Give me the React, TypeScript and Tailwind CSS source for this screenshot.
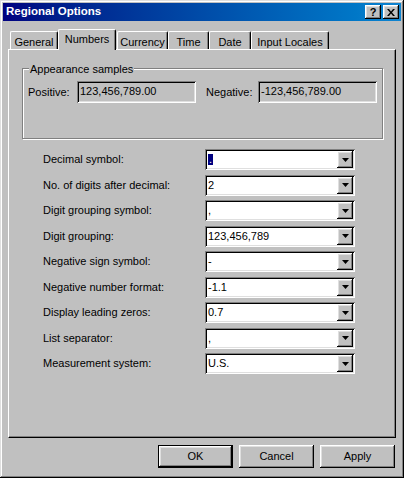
import React from "react";

const raised =
  "shadow-[inset_-1px_-1px_0_#000,inset_1px_1px_0_#fff,inset_-2px_-2px_0_#808080,inset_2px_2px_0_#dfdfdf]";
const sunken =
  "shadow-[inset_1px_1px_0_#808080,inset_-1px_-1px_0_#fff,inset_2px_2px_0_#000,inset_-2px_-2px_0_#dfdfdf]";

const tabs = [
  { label: "General", w: "w-[48px]", ml: "" },
  { label: "Numbers", w: "w-[58px]", ml: "", active: true },
  { label: "Currency", w: "w-[51px]", ml: "ml-[1px]" },
  { label: "Time", w: "w-[41px]", ml: "" },
  { label: "Date", w: "w-[42px]", ml: "" },
  { label: "Input Locales", w: "w-[78px]", ml: "" },
];

const rows: [string, string][] = [
  ["Decimal symbol:", "."],
  ["No. of digits after decimal:", "2"],
  ["Digit grouping symbol:", ","],
  ["Digit grouping:", "123,456,789"],
  ["Negative sign symbol:", "-"],
  ["Negative number format:", "-1.1"],
  ["Display leading zeros:", "0.7"],
  ["List separator:", ","],
  ["Measurement system:", "U.S."],
];

function Combo({ value, focused }: { value: string; focused?: boolean }) {
  return (
    <div className={`flex h-[21px] w-[150px] items-stretch bg-white p-[2px] ${sunken}`}>
      <div className="flex flex-1 items-center pl-[1px] leading-none">
        {focused ? (
          <span className="bg-[#000080] px-[1px] text-white">{value}</span>
        ) : (
          <span>{value}</span>
        )}
      </div>
      <div className={`flex w-[16px] items-center justify-center bg-[#c0c0c0] ${raised}`}>
        <svg width="7" height="4" viewBox="0 0 7 4">
          <path d="M0 0h7L3.5 4z" fill="#000" />
        </svg>
      </div>
    </div>
  );
}

function Sample({ value }: { value: string }) {
  return (
    <div className={`flex h-[22px] w-[119px] items-center bg-[#c0c0c0] pb-[1px] pl-[3px] ${sunken}`}>
      {value}
    </div>
  );
}

function Button({ label, isDefault }: { label: string; isDefault?: boolean }) {
  return (
    <div
      className={`flex h-[23px] w-[75px] items-center justify-center bg-[#c0c0c0] ${
        isDefault ? "border border-black" : ""
      }`}
    >
      <div className={`flex h-full w-full items-center justify-center ${raised}`}>{label}</div>
    </div>
  );
}

export default function App() {
  return (
    <div
      className={`flex h-[478px] w-[404px] flex-col bg-[#c0c0c0] p-[3px] font-['Liberation_Sans',Arial,sans-serif] text-[11px] text-black shadow-[inset_-1px_-1px_0_#000,inset_1px_1px_0_#dfdfdf,inset_-2px_-2px_0_#808080,inset_2px_2px_0_#fff]`}
    >
      {/* title bar */}
      <div className="flex h-[18px] items-center justify-between bg-linear-to-r from-[#000080] to-[#1084d0] pl-[3px] pr-[2px]">
        <span className="text-[11.5px] font-bold text-white">Regional Options</span>
        <div className="flex gap-[2px]">
          <div className={`flex h-[14px] w-[16px] items-center justify-center bg-[#c0c0c0] text-[11px] font-bold leading-none ${raised}`}>
            ?
          </div>
          <div className={`flex h-[14px] w-[16px] items-center justify-center bg-[#c0c0c0] ${raised}`}>
            <svg width="8" height="7" viewBox="0 0 8 7">
              <path d="M0 0h2l2 2.5L6 0h2L5 3.5 8 7H6L4 4.5 2 7H0l3-3.5z" fill="#000" />
            </svg>
          </div>
        </div>
      </div>

      <div className="mx-[5px] mt-[8px] flex flex-col">
        {/* tabs */}
        <div className="relative z-10 ml-[2px] flex h-[20px] items-end">
          {tabs.map((t) =>
            t.active ? (
              <div
                key={t.label}
                className={`-mb-px flex h-[21px] ${t.w} items-start justify-center rounded-t-[2px] border-l border-r border-t border-l-white border-r-black border-t-white bg-[#c0c0c0] pt-[1px] shadow-[inset_-1px_0_0_#808080]`}
              >
                {t.label}
              </div>
            ) : (
              <div
                key={t.label}
                className={`flex h-[18px] ${t.w} ${t.ml} items-start justify-center rounded-t-[2px] border-l border-r border-t border-l-white border-r-black border-t-white pt-[2px] shadow-[inset_-1px_0_0_#808080]`}
              >
                {t.label}
              </div>
            )
          )}
        </div>

        {/* panel */}
        <div className="flex h-[389px] flex-col border border-b-black border-l-white border-r-black border-t-white shadow-[inset_-1px_-1px_0_#808080]">
          <div className="relative ml-[13px] mt-[18px] h-[71px] w-[361px] border border-[#808080] shadow-[1px_1px_0_#fff,inset_1px_1px_0_#fff]">
            <span className="absolute -top-[8px] left-[6px] bg-[#c0c0c0] px-[1px]">Appearance samples</span>
            <div className="flex items-center pl-[5px] pt-[12px]">
              <span className="w-[49px]">Positive:</span>
              <Sample value="123,456,789.00" />
              <span className="ml-[10px] w-[52px]">Negative:</span>
              <Sample value="-123,456,789.00" />
            </div>
          </div>

          <div className="ml-[34px] mt-[10px] grid grid-cols-[162px_150px] gap-y-[4.5px]">
            {rows.map(([label, value], i) => (
              <React.Fragment key={label}>
                <div className="flex items-center">{label}</div>
                <Combo value={value} focused={i === 0} />
              </React.Fragment>
            ))}
          </div>
        </div>

        {/* buttons */}
        <div className="mt-[7px] flex justify-end gap-[6px] pr-[1px]">
          <Button label="OK" isDefault />
          <Button label="Cancel" />
          <Button label="Apply" />
        </div>
      </div>
    </div>
  );
}
